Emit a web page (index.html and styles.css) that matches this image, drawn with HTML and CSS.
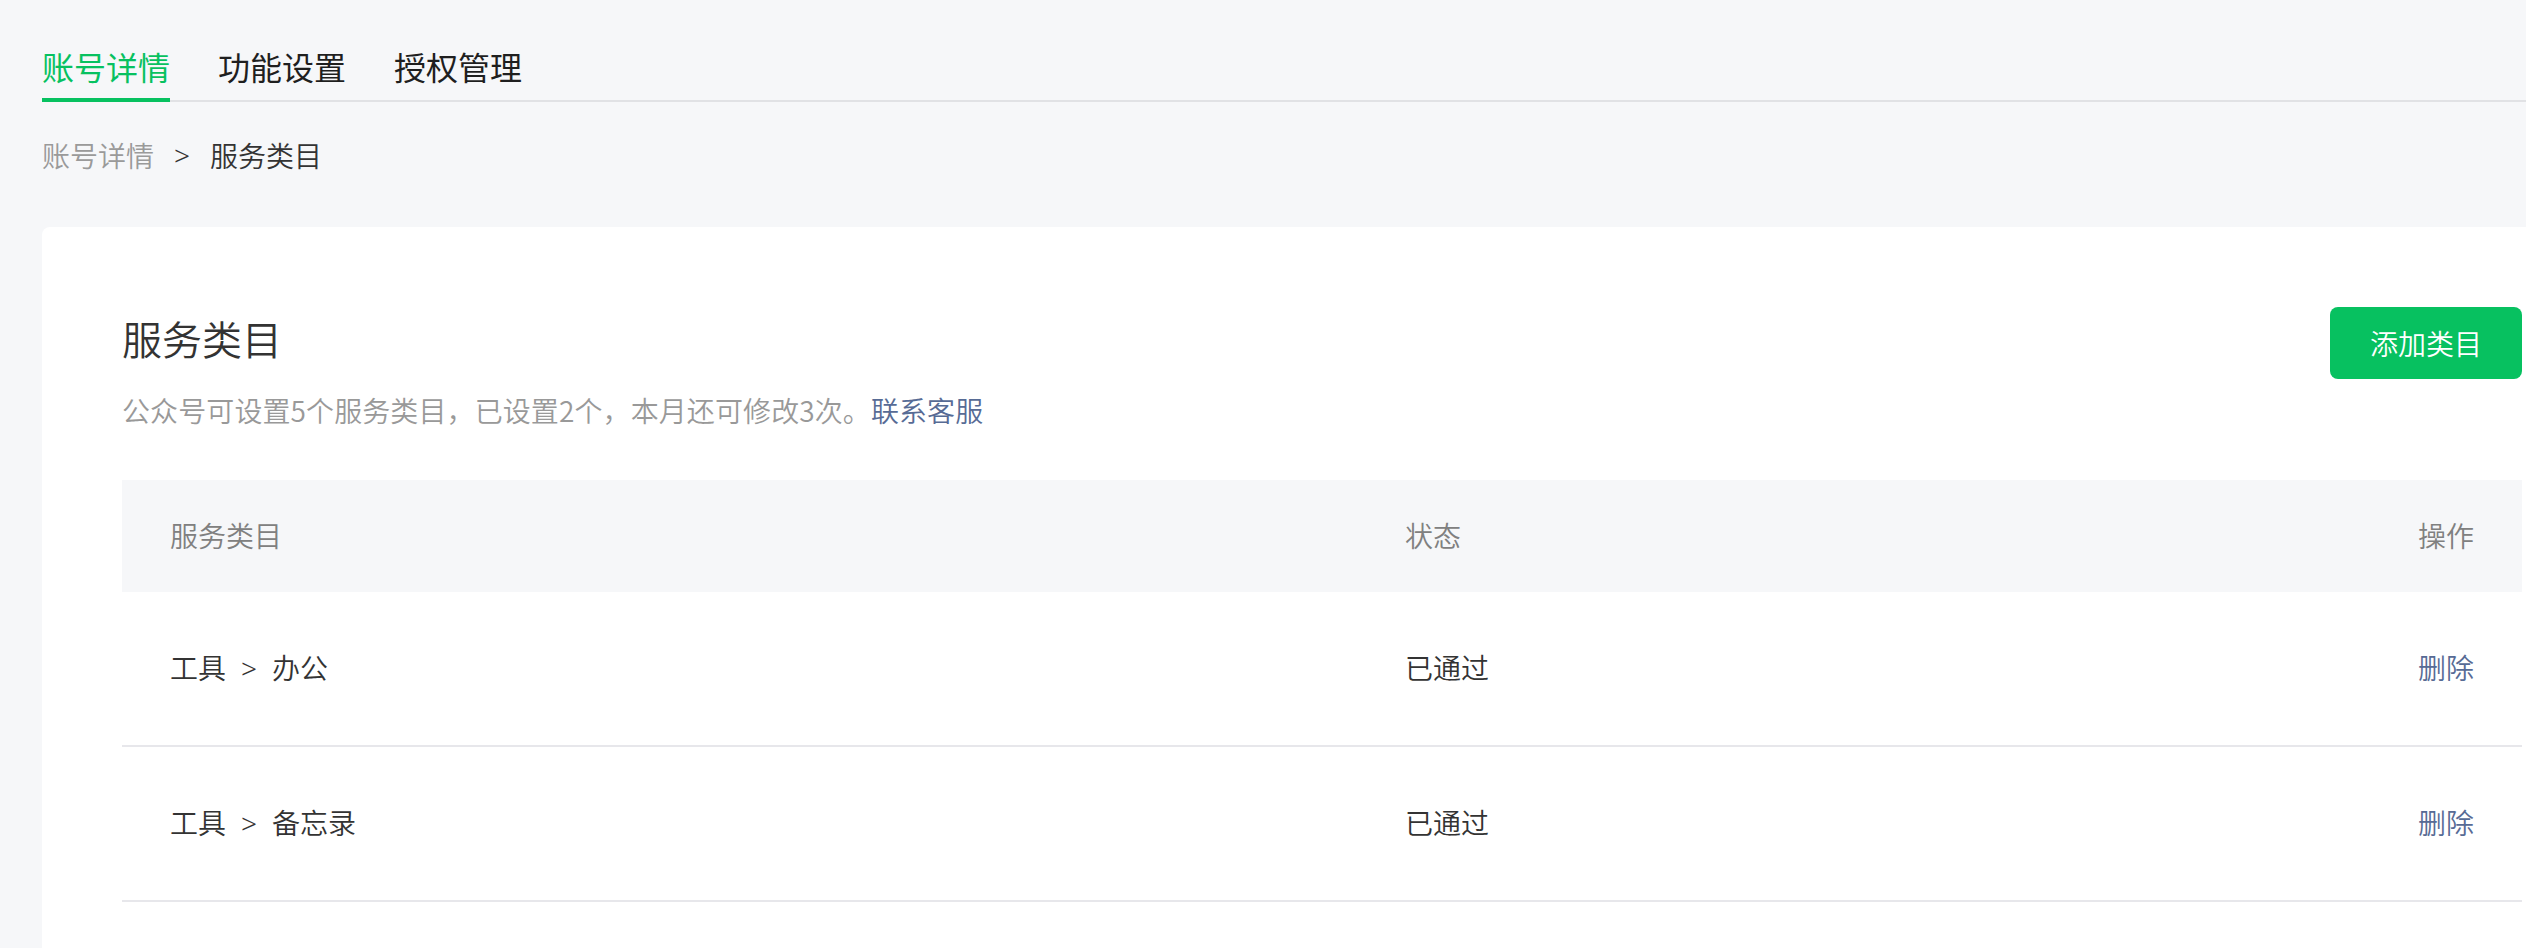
FILE: index.html
```html
<!DOCTYPE html>
<html lang="zh-CN">
<head>
<meta charset="utf-8">
<title>服务类目</title>
<link rel="stylesheet" href="styles.css">
</head>
<body>
<div class="page">
  <nav class="tabs">
    <a class="tab active">账号详情</a>
    <a class="tab">功能设置</a>
    <a class="tab">授权管理</a>
  </nav>
  <div class="crumbs">
    <span class="crumb-link">账号详情</span><span class="crumb-sep">&gt;</span><span class="crumb-current">服务类目</span>
  </div>
  <section class="card">
    <div class="card-head">
      <div class="head-text">
        <h2 class="title">服务类目</h2>
        <p class="desc">公众号可设置5个服务类目，已设置2个，本月还可修改3次。<a class="link">联系客服</a></p>
      </div>
      <button class="btn-primary">添加类目</button>
    </div>
    <div class="table">
      <div class="row row-head">
        <div class="cell">服务类目</div>
        <div class="cell">状态</div>
        <div class="cell cell-op">操作</div>
      </div>
      <div class="row row-body">
        <div class="cell">工具<span class="sep">&gt;</span>办公</div>
        <div class="cell">已通过</div>
        <div class="cell cell-op"><a class="link">删除</a></div>
      </div>
      <div class="row row-body">
        <div class="cell">工具<span class="sep">&gt;</span>备忘录</div>
        <div class="cell">已通过</div>
        <div class="cell cell-op"><a class="link">删除</a></div>
      </div>
    </div>
  </section>
</div>
</body>
</html>
```

FILE: styles.css
```css
html, body {
  margin: 0;
  padding: 0;
  overflow: hidden;
  background: #f6f7f9;
}

body {
  font-family: "Noto Sans CJK SC", "Noto Sans", sans-serif;
  font-weight: 350;
  color: #333333;
}

.page {
  padding: 42px 0 0 42px;
}

.tabs {
  display: flex;
  border-bottom: 2px solid #e1e2e5;
}

.tab {
  font-size: 32px;
  line-height: 48px;
  padding-bottom: 8px;
  margin-right: 48px;
  margin-bottom: -2px;
  border-bottom: 4px solid transparent;
  color: #1f1f1f;
  font-weight: 400;
  cursor: pointer;
}

.tab.active {
  color: #07c160;
  border-bottom-color: #07c160;
}

.crumbs {
  margin-top: 33px;
  font-size: 28px;
  line-height: 40px;
  display: flex;
}

.crumb-link {
  color: #9a9a9a;
}

.crumb-sep {
  margin: 0 20px;
  color: #333333;
  font-family: "Noto Sans", sans-serif;
}

.crumb-current {
  color: #333333;
}

.card {
  margin-top: 52px;
  margin-right: -76px;
  background: #ffffff;
  border-radius: 8px;
  padding: 80px 80px 80px 80px;
}

.card-head {
  display: flex;
  justify-content: space-between;
  align-items: flex-start;
}

.title {
  margin: 0;
  font-size: 40px;
  line-height: 62px;
  font-weight: 350;
  color: #333333;
}

.desc {
  margin: 21px 0 0;
  font-size: 28px;
  line-height: 40px;
  letter-spacing: 0.1px;
  color: #999999;
}

.link {
  color: #576b95;
  cursor: pointer;
}

.btn-primary {
  height: 72px;
  padding: 0 40px;
  border: none;
  border-radius: 8px;
  background: #07c160;
  color: #ffffff;
  font-family: inherit;
  font-weight: 350;
  font-size: 28px;
  line-height: 72px;
}

.table {
  margin-top: 50px;
}

.row {
  display: grid;
  grid-template-columns: 1235px 1fr auto;
  font-size: 28px;
  line-height: 40px;
}

.cell {
  padding: 0 48px;
}

.cell-op {
  text-align: right;
}

.row-head {
  background: #f6f7f9;
  color: #808080;
  padding: 35px 0 37px;
}

.row-body {
  padding: 55px 0 57px;
  border-bottom: 2px solid #e7e7eb;
  color: #333333;
}

.sep {
  margin: 0 15px;
  font-family: "Noto Sans", sans-serif;
}
```
